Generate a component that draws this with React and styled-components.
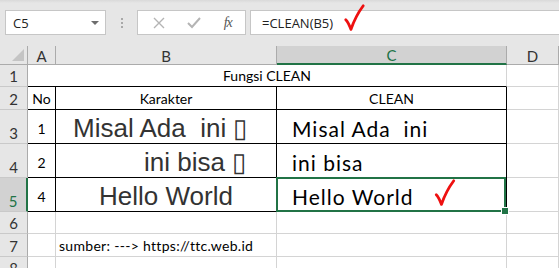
import styled, { createGlobalStyle } from 'styled-components';

const GlobalStyle = createGlobalStyle`
  body {
    margin: 0;
    background: #ffffff;
    font-family: Lato, "Liberation Sans", sans-serif;
    overflow: hidden;
  }
`;

const GRID = '#d4d4d4';
const INK = '#000000';
const GREEN = '#217346';

const Window = styled.div`
  width: 559px;
  height: 268px;
  overflow: hidden;
  background: #ffffff;
`;

const Toolbar = styled.div`
  height: 46px;
  box-sizing: border-box;
  padding: 10px 0 0 5px;
  background: linear-gradient(#d9d9d9 0, #e6e6e6 3px, #e6e6e6 100%);
  display: flex;
  align-items: flex-start;
`;

const NameBox = styled.div`
  width: 101px;
  height: 25px;
  box-sizing: border-box;
  border: 1px solid #c6c6c6;
  background: #ffffff;
  display: flex;
  align-items: center;
  justify-content: space-between;
  padding: 0 6px 0 7px;
  font-family: "Open Sans", "Noto Sans", sans-serif;
  font-size: 13px;
  color: #222;
`;

const Caret = styled.span`
  width: 0;
  height: 0;
  border-left: 4px solid transparent;
  border-right: 4px solid transparent;
  border-top: 4px solid #6d6d6d;
`;

const Grip = styled.div`
  width: 31px;
  height: 25px;
  display: flex;
  flex-direction: column;
  align-items: center;
  justify-content: center;
  gap: 2px;
  span {
    width: 2px;
    height: 2px;
    background: #a8a8a8;
  }
`;

const FxButtons = styled.div`
  width: 109px;
  height: 25px;
  box-sizing: border-box;
  border: 1px solid #c6c6c6;
  background: #ffffff;
  display: flex;
  align-items: center;
  justify-content: space-around;
  padding: 0 2px 0 4px;
`;

const FxLabel = styled.span`
  font-family: "Liberation Serif", serif;
  font-style: italic;
  font-size: 14px;
  color: #555;
  letter-spacing: -1px;
`;

const FormulaBox = styled.div`
  flex: 1;
  margin-left: 4px;
  height: 25px;
  box-sizing: border-box;
  border: 1px solid #c6c6c6;
  border-right: none;
  background: #ffffff;
  display: flex;
  align-items: center;
  padding-left: 11px;
  font-family: "Open Sans", "Noto Sans", sans-serif;
  font-size: 13px;
  color: #222;
  overflow: visible;
`;

const Sheet = styled.div`
  position: relative;
  display: grid;
  grid-template-columns: 28px 28px 221px 230px 52px;
  grid-template-rows: 19px 22px 23px 34px 34px 34px 22px 23px 22px;
`;

const Corner = styled.div`
  position: relative;
  background: #e6e6e6;
  border-right: 1px solid #ababab;
  border-bottom: 1px solid #ababab;
  &::after {
    content: '';
    position: absolute;
    right: 3px;
    bottom: 3px;
    width: 0;
    height: 0;
    border-left: 12px solid transparent;
    border-bottom: 12px solid #c4c4c4;
  }
`;

const ColHead = styled.div`
  background: ${(p) => (p.$active ? '#d2d2d2' : '#e6e6e6')};
  border-right: 1px solid #ababab;
  border-bottom: ${(p) => (p.$active ? `2px solid ${GREEN}` : '1px solid #ababab')};
  color: ${(p) => (p.$active ? GREEN : '#333')};
  display: flex;
  align-items: center;
  justify-content: center;
  font-size: 15px;
  padding-top: 1px;
`;

const RowHead = styled.div`
  background: ${(p) => (p.$active ? '#d2d2d2' : '#e6e6e6')};
  border-right: ${(p) => (p.$active ? `2px solid ${GREEN}` : '1px solid #ababab')};
  border-bottom: 1px solid #c9c9c9;
  color: ${(p) => (p.$active ? GREEN : '#333')};
  display: flex;
  align-items: flex-end;
  justify-content: center;
  padding-bottom: 1px;
  font-size: 15px;
`;

const Cell = styled.div`
  grid-column: ${(p) => p.$span || 'auto'};
  border-right: 1px solid ${(p) => p.$r || GRID};
  border-bottom: 1px solid ${(p) => p.$b || GRID};
  display: flex;
  align-items: flex-end;
  justify-content: ${(p) => p.$align || 'flex-start'};
  padding: ${(p) => p.$pad || '0 3px 2px'};
  font-size: 14px;
  letter-spacing: ${(p) => p.$ls || 'normal'};
  color: #000;
  white-space: pre;
  overflow: visible;
  min-width: 0;
`;

const BigArial = styled.span`
  font-family: "Liberation Sans", Arial, sans-serif;
  font-size: 26px;
  color: #333;
  line-height: 1;
`;

const BigCalibri = styled.span`
  font-size: 21px;
  letter-spacing: 1px;
  line-height: 1;
  color: #000;
`;

const Selection = styled.div`
  position: absolute;
  left: 276px;
  top: 131px;
  width: 230px;
  height: 35px;
  box-sizing: border-box;
  border: 2px solid ${GREEN};
  pointer-events: none;
  &::after {
    content: '';
    position: absolute;
    right: -5px;
    bottom: -5px;
    width: 6px;
    height: 6px;
    background: ${GREEN};
    border: 1px solid #fff;
  }
`;

const Check = ({ w, h }) => (
  <svg width={w} height={h} viewBox="0 0 24 32" style={{ overflow: 'visible' }}>
    <path
      d="M2 18 C4 20 6 24 8 29 C11 20 16 10 22 2"
      fill="none"
      stroke="#ee1010"
      strokeWidth="3.2"
      strokeLinecap="round"
      strokeLinejoin="round"
    />
  </svg>
);

const CheckSpot = styled.span`
  display: inline-flex;
  margin-left: ${(p) => p.$ml}px;
  margin-top: ${(p) => p.$mt || 0}px;
  align-self: ${(p) => p.$self || 'auto'};
`;

const App = () => {
  return (
    <Window>
      <GlobalStyle />
      <Toolbar>
        <NameBox>
          C5
          <Caret />
        </NameBox>
        <Grip>
          <span />
          <span />
          <span />
        </Grip>
        <FxButtons>
          <svg width="12" height="12" viewBox="0 0 12 12">
            <path d="M1 1 L11 11 M11 1 L1 11" stroke="#b4b4b4" strokeWidth="1.4" />
          </svg>
          <svg width="14" height="12" viewBox="0 0 14 12">
            <path d="M1 6 L5 10 L13 1" fill="none" stroke="#b4b4b4" strokeWidth="2" />
          </svg>
          <FxLabel>fx</FxLabel>
        </FxButtons>
        <FormulaBox>
          =CLEAN(B5)
          <CheckSpot $ml={11} $mt={-10}>
            <Check w={21} h={30} />
          </CheckSpot>
        </FormulaBox>
      </Toolbar>
      <Sheet>
        <Corner />
        <ColHead>A</ColHead>
        <ColHead>B</ColHead>
        <ColHead $active>C</ColHead>
        <ColHead>D</ColHead>

        <RowHead>1</RowHead>
        <Cell $span="span 3" $b={INK} $align="center">
          Fungsi CLEAN
        </Cell>
        <Cell />

        <RowHead>2</RowHead>
        <Cell $r={INK} $b={INK} $align="center">No</Cell>
        <Cell $r={INK} $b={INK} $align="center">Karakter</Cell>
        <Cell $r={INK} $b={INK} $align="center">CLEAN</Cell>
        <Cell />

        <RowHead>3</RowHead>
        <Cell $r={INK} $b={INK} $align="center" $pad="0 0 6px">1</Cell>
        <Cell $r={INK} $b={INK} $pad="0 0 2px 17px">
          <BigArial>Misal Ada  ini ▯</BigArial>
        </Cell>
        <Cell $r={INK} $b={INK} $pad="0 0 4px 15px">
          <BigCalibri>Misal Ada  ini</BigCalibri>
        </Cell>
        <Cell />

        <RowHead>4</RowHead>
        <Cell $r={INK} $b={INK} $align="center" $pad="0 0 6px">2</Cell>
        <Cell $r={INK} $b={INK} $pad="0 0 2px 88px">
          <BigArial>ini bisa ▯</BigArial>
        </Cell>
        <Cell $r={INK} $b={INK} $pad="0 0 4px 15px">
          <BigCalibri>ini bisa</BigCalibri>
        </Cell>
        <Cell />

        <RowHead $active>5</RowHead>
        <Cell $r={INK} $b={INK} $align="center" $pad="0 0 6px">4</Cell>
        <Cell $r={INK} $b={INK} $align="center" $pad="0 0 2px">
          <BigArial>Hello World</BigArial>
        </Cell>
        <Cell $r={INK} $b={INK} $pad="0 0 4px 15px">
          <BigCalibri>Hello World</BigCalibri>
          <CheckSpot $ml={19} $self="center">
            <Check w={24} h={28} />
          </CheckSpot>
        </Cell>
        <Cell />

        <RowHead>6</RowHead>
        <Cell />
        <Cell />
        <Cell />
        <Cell />

        <RowHead>7</RowHead>
        <Cell />
        <Cell $ls="0.3px">sumber: ---&gt; https://ttc.web.id</Cell>
        <Cell />
        <Cell />

        <RowHead>8</RowHead>
        <Cell />
        <Cell />
        <Cell />
        <Cell />
        <Selection />
      </Sheet>
    </Window>
  );
};

export default App;
